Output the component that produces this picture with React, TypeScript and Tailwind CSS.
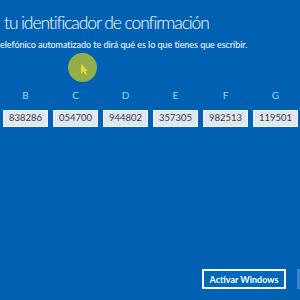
const codes = [
  { letter: 'B', value: '838286' },
  { letter: 'C', value: '054700' },
  { letter: 'D', value: '944802' },
  { letter: 'E', value: '357305' },
  { letter: 'F', value: '982513' },
  { letter: 'G', value: '119501' },
];

export default function App() {
  return (
    <div
      className="relative flex h-[300px] w-[300px] flex-col overflow-hidden bg-[#0061b3] text-white"
      style={{ fontFamily: 'Lato, "Noto Sans", sans-serif' }}
    >
      <h1 className="pl-[4px] pt-[11px] text-[17.5px] font-light leading-[23px] tracking-[-1.1px]">
        tu identificador de confirmación
      </h1>
      <p className="mt-[4px] text-[9px] leading-[14px] tracking-[-0.05px]">
        elefónico automatizado te dirá qué es lo que tienes que escribir.
      </p>

      <div className="mt-[36px] flex gap-[5px] pl-[3px]">
        {codes.map((c) => (
          <div key={c.letter} className="flex w-[45px] flex-col items-center">
            <span className="text-[10px] leading-[14px] text-[#9fd3ff]">{c.letter}</span>
            <div className="mt-[8px] flex h-[17px] w-full items-center border border-[#f2f6fa] bg-[#dfe8f1] pl-[5px] text-[9.5px] text-[#3b3b3b]">
              {c.value}
            </div>
          </div>
        ))}
      </div>

      <div className="mt-auto mb-[11px] flex justify-end gap-[11px]">
        <button className="h-[20px] w-[84px] border-2 border-white bg-[#0067bb] text-[9px] font-bold leading-none">
          Activar Windows
        </button>
        <div className="h-[20px] w-[3px] bg-[#3a86c8]" />
      </div>

      {/* click highlight + cursor */}
      <div className="absolute left-[68px] top-[53px] h-[29px] w-[29px] rounded-full bg-[#93ad47]" />
      <svg className="absolute left-[80px] top-[63px]" width="9" height="13" viewBox="0 0 9 13">
        <path d="M1 1 L1 11 L3.5 8.5 L5.5 12 L7 11.2 L5 7.8 L8 7.8 Z" fill="#e4d640" />
      </svg>
    </div>
  );
}
